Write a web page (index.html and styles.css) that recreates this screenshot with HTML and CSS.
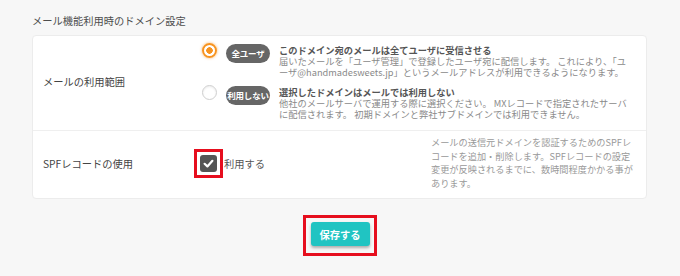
FILE: index.html
```html
<!DOCTYPE html>
<html lang="ja">
<head>
    <meta charset="UTF-8">
    <meta name="viewport" content="width=device-width, initial-scale=1.0">
    <title>ドメイン設定</title>
    <link rel="stylesheet" href="styles.css">
</head>
<body>

<div class="page">
    <h2 class="section-title">メール機能利用時のドメイン設定</h2>

    <div class="card">
        <!-- メールの利用範囲 -->
        <div class="row row-scope">
            <div class="row-label">メールの利用範囲</div>
            <div class="options">
                <div class="option">
                    <span class="radio checked"></span>
                    <span class="badge">全ユーザ</span>
                    <div class="option-text">
                        <strong>このドメイン宛のメールは全てユーザに受信させる</strong>
                        <p>届いたメールを「ユーザ管理」で登録したユーザ宛に配信します。 これにより、「ユ<br>ーザ@handmadesweets.jp」というメールアドレスが利用できるようになります。</p>
                    </div>
                </div>
                <div class="option">
                    <span class="radio"></span>
                    <span class="badge">利用しない</span>
                    <div class="option-text">
                        <strong>選択したドメインはメールでは利用しない</strong>
                        <p>他社のメールサーバで運用する際に選択ください。 MXレコードで指定されたサーバ<br>に配信されます。 初期ドメインと弊社サブドメインでは利用できません。</p>
                    </div>
                </div>
            </div>
        </div>

        <!-- SPFレコード -->
        <div class="row row-spf">
            <div class="row-label">SPFレコードの使用</div>
            <label class="check-item">
                <span class="mark-box mark-check">
                    <span class="checkbox">
                        <svg width="17" height="17" viewBox="0 0 17 17">
                            <polyline points="4.6,8.8 7.4,11.4 12.4,5.8" fill="none" stroke="#fff" stroke-width="2.2" stroke-linecap="round" stroke-linejoin="round"/>
                        </svg>
                    </span>
                </span>
                利用する
            </label>
            <p class="row-note">メールの送信元ドメインを認証するためのSPFレ<br>コードを追加・削除します。SPFレコードの設定<br>変更が反映されるまでに、数時間程度かかる事が<br>あります。</p>
        </div>
    </div>

    <div class="actions">
        <span class="mark-box mark-btn">
            <button class="btn-save">保存する</button>
        </span>
    </div>
</div>

</body>
</html>
```

FILE: styles.css
```css
body {
    font-family: "Noto Sans CJK JP", "Noto Sans", sans-serif;
    background: #f7f7f7;
    color: #555;
    margin: 0;
    padding: 0;
}
.page {
    padding: 0 33px 0 32px;
}
.section-title {
    font-size: 10.25px;
    font-weight: normal;
    line-height: 15px;
    color: #4d4d4d;
    margin: 13px 0 7px;
}
.card {
    background: #fff;
    border: 1px solid #ececec;
    border-radius: 4px;
}
.row {
    display: grid;
    grid-template-columns: 151px 1fr;
    align-items: center;
    padding: 0 11px 0 10px;
}
.row-scope {
    padding-top: 6px;
    padding-bottom: 10px;
    border-bottom: 1px solid #efefef;
}
.row-spf {
    grid-template-columns: 151px 237px 1fr;
    padding-top: 5px;
    padding-bottom: 8px;
}
.row-label {
    font-size: 10.25px;
    color: #444;
}

/* radio options */
.options {
    padding-left: 8px;
    display: flex;
    flex-direction: column;
    gap: 6px;
}
.option {
    display: flex;
    align-items: flex-start;
}
.radio {
    flex: none;
    width: 15px;
    height: 15px;
    box-sizing: border-box;
    border-radius: 50%;
    border: 1.5px solid #cfcfcf;
    background: #fff;
    box-shadow: inset 0 1px 2px rgba(0,0,0,0.08);
    margin-top: 1px;
}
.radio.checked {
    border: 2.5px solid #f7931e;
    box-shadow: 0 0 3px rgba(247,147,30,0.7);
    background: radial-gradient(circle, #f7931e 0 3px, #fff 3.5px);
}
.badge {
    flex: none;
    width: 44px;
    height: 19px;
    line-height: 19px;
    margin: 2px 0 0 9px;
    border-radius: 10px;
    background: #666;
    color: #fff;
    font-size: 8.5px;
    font-weight: bold;
    text-align: center;
    letter-spacing: -0.2px;
}
.option-text {
    margin: 3px 0 0 9px;
    font-size: 9.25px;
    line-height: 11px;
    white-space: nowrap;
}
.option-text strong {
    display: block;
    color: #555;
}
.option-text p {
    margin: 0;
    color: #8a8a8a;
}

/* SPF */
.check-item {
    display: flex;
    align-items: center;
    font-size: 10.25px;
    color: #555;
}
.mark-box {
    display: inline-block;
    border: 3px solid #e60e1e;
}
.mark-check {
    padding: 3px;
    margin-right: 1px;
}
.checkbox {
    display: block;
    width: 17px;
    height: 17px;
    border-radius: 3px;
    background: #555;
}
.checkbox svg {
    display: block;
}
.row-note {
    margin: 0;
    font-size: 9.2px;
    line-height: 13.5px;
    color: #999;
    white-space: nowrap;
}

/* save */
.actions {
    margin-top: 16px;
    text-align: center;
}
.mark-btn {
    padding: 4px 4px 7px 5px;
}
.btn-save {
    display: block;
    width: 59px;
    height: 24px;
    padding: 0;
    border: none;
    border-radius: 3px;
    background: #20c4c2;
    color: #fff;
    font-family: inherit;
    font-size: 10.25px;
    font-weight: bold;
    box-shadow: 0 2px 3px rgba(0,0,0,0.3);
    cursor: pointer;
}
```
